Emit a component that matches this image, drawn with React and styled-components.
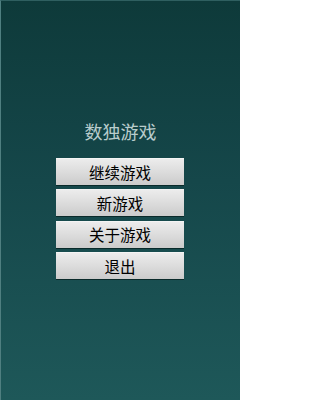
import React from "react";
import styled, { createGlobalStyle } from "styled-components";

const Global = createGlobalStyle`
  html, body { margin: 0; padding: 0; }
  body { width: 240px; height: 400px; overflow: hidden; }
`;

const Screen = styled.div`
  box-sizing: border-box;
  width: 240px;
  height: 400px;
  background: linear-gradient(180deg, #0e3a3a 0%, #15474a 45%, #1e5859 100%);
  border-left: 1px solid #4f7f80;
  border-top: 1px solid #2f5f60;
  display: flex;
  flex-direction: column;
  align-items: center;
  padding-top: 119px;
  font-family: "Noto Sans CJK SC", "Noto Sans", sans-serif;
`;

const Title = styled.h1`
  margin: 0 0 16px 0;
  font-size: 18px;
  line-height: 22px;
  font-weight: 400;
  color: #b9cccc;
`;

const Menu = styled.div`
  display: flex;
  flex-direction: column;
  gap: 4.35px;
  margin-left: -1px;
`;

const MenuButton = styled.button`
  box-sizing: border-box;
  width: 128px;
  height: 27px;
  padding: 0;
  border: none;
  border-top: 1px solid #f4f4f4;
  box-shadow: 0 1px 0 #0a2a2a;
  background: linear-gradient(180deg, #ececec 0%, #dcdcdc 50%, #cbcbcb 100%);
  font-family: "Noto Sans CJK SC", "Noto Sans", sans-serif;
  font-size: 15.5px;
  font-weight: 400;
  line-height: 25px;
  color: #000;
  cursor: pointer;
`;

const items = ["继续游戏", "新游戏", "关于游戏", "退出"];

export default function App() {
  return (
    <>
      <Global />
      <Screen>
        <Title>数独游戏</Title>
        <Menu>
          {items.map((t) => (
            <MenuButton key={t}>{t}</MenuButton>
          ))}
        </Menu>
      </Screen>
    </>
  );
}
